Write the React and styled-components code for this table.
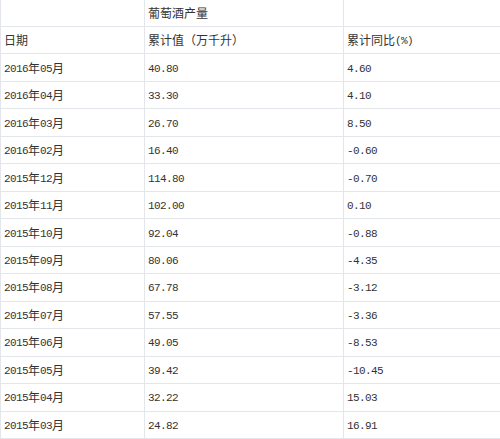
import React from "react";
import styled, { createGlobalStyle } from "styled-components";

const Global = createGlobalStyle`
  html, body { margin: 0; padding: 0; background: #fff; }
  body { font-family: "Noto Sans CJK SC", sans-serif; color: #333; overflow: hidden; }
`;

const Table = styled.div`
  width: 500px;
  display: flex;
  flex-direction: column;
`;

const Row = styled.div`
  display: grid;
  grid-template-columns: 145px 199px 1fr;
  height: ${(p) => (p.$first ? "27px" : "27.47px")};
  box-sizing: border-box;
`;

const Cell = styled.div`
  box-sizing: border-box;
  display: flex;
  align-items: center;
  padding-left: ${(p) => (p.$first ? "3px" : "3px")};
  border-bottom: 1px solid #e3e7eb;
  border-right: ${(p) => (p.$last ? "none" : "1px solid #e3e7eb")};
  border-left: ${(p) => (p.$first ? "1px solid #e3e7eb" : "none")};
  font-size: 12px;
  line-height: 14px;
  white-space: nowrap;
  overflow: hidden;
  color: #333;
`;

const Latin = styled.span`
  font-family: "Liberation Mono", monospace;
  font-size: 11px;
  letter-spacing: -0.6px;
  position: relative;
  top: 1px;
`;

const Cjk = styled.span`
  font-family: "Noto Sans CJK SC", sans-serif;
  font-size: 12px;
`;

function Txt({ s }) {
  if (!s) return null;
  const parts = s.match(/[\x00-\x7f]+|[^\x00-\x7f]+/g) || [];
  return (
    <>
      {parts.map((p, i) =>
        /^[\x00-\x7f]/.test(p) ? <Latin key={i}>{p}</Latin> : <Cjk key={i}>{p}</Cjk>
      )}
    </>
  );
}

const data = [
  ["2016年05月", "40.80", "4.60"],
  ["2016年04月", "33.30", "4.10"],
  ["2016年03月", "26.70", "8.50"],
  ["2016年02月", "16.40", "-0.60"],
  ["2015年12月", "114.80", "-0.70"],
  ["2015年11月", "102.00", "0.10"],
  ["2015年10月", "92.04", "-0.88"],
  ["2015年09月", "80.06", "-4.35"],
  ["2015年08月", "67.78", "-3.12"],
  ["2015年07月", "57.55", "-3.36"],
  ["2015年06月", "49.05", "-8.53"],
  ["2015年05月", "39.42", "-10.45"],
  ["2015年04月", "32.22", "15.03"],
  ["2015年03月", "24.82", "16.91"],
];

const rows = [
  ["", "葡萄酒产量", ""],
  ["日期", "累计值（万千升）", "累计同比(%)"],
  ...data,
];

export default function App() {
  return (
    <>
      <Global />
      <Table>
        {rows.map((r, i) => (
          <Row key={i} $first={i === 0}>
            {r.map((c, j) => (
              <Cell key={j} $first={j === 0} $last={j === 2}>
                <Txt s={c} />
              </Cell>
            ))}
          </Row>
        ))}
      </Table>
    </>
  );
}
